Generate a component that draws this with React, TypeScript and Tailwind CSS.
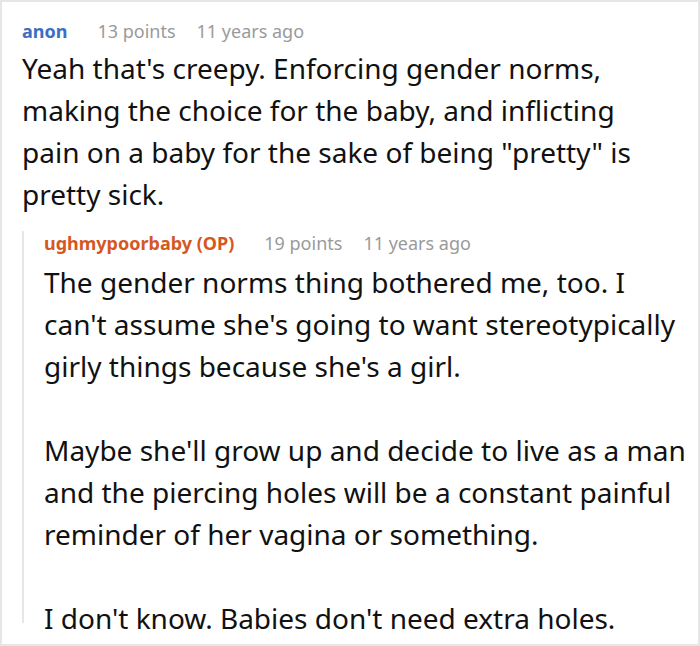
import React from "react";

const font = { fontFamily: '"Noto Sans", "DejaVu Sans", sans-serif' };

function Lines({ lines }: { lines: string[] }) {
  return (
    <p>
      {lines.map((l, i) => (
        <span key={i} className="block whitespace-nowrap">
          {l}
        </span>
      ))}
    </p>
  );
}

export default function App() {
  return (
    <div
      className="w-[700px] h-[646px] border-2 border-[#e6e6e6] bg-white overflow-hidden pl-5 pr-2"
      style={font}
    >
      <div className="flex items-center h-[24px] mt-[17px] text-[18px] leading-[24px]">
        <span className="font-bold text-[#3b6fc2]">anon</span>
        <span className="ml-[30px] text-[#9a9a9a]">13 points</span>
        <span className="ml-[21px] text-[#9a9a9a]">11 years ago</span>
      </div>
      <div className="mt-[4px] text-[28px] leading-[42px] text-[#111]">
        <Lines
          lines={[
            "Yeah that's creepy. Enforcing gender norms,",
            "making the choice for the baby, and inflicting",
            'pain on a baby for the sake of being "pretty" is',
            "pretty sick.",
          ]}
        />
      </div>
      <div className="mt-[21px] border-l-2 border-[#e6e6e6] pl-5 h-[392px]">
        <div className="flex items-center h-[24px] mt-[-5px] text-[18px] leading-[24px]">
          <span className="font-bold text-[#d5581f]">ughmypoorbaby (OP)</span>
          <span className="ml-[30px] text-[#9a9a9a]">19 points</span>
          <span className="ml-[21px] text-[#9a9a9a]">11 years ago</span>
        </div>
        <div className="mt-[6px] text-[28px] leading-[42px] text-[#111]">
          <Lines
            lines={[
              "The gender norms thing bothered me, too. I",
              "can't assume she's going to want stereotypically",
              "girly things because she's a girl.",
            ]}
          />
          <div className="mt-[42px]">
            <Lines
              lines={[
                "Maybe she'll grow up and decide to live as a man",
                "and the piercing holes will be a constant painful",
                "reminder of her vagina or something.",
              ]}
            />
          </div>
          <div className="mt-[42px]">
            <Lines lines={["I don't know. Babies don't need extra holes."]} />
          </div>
        </div>
      </div>
    </div>
  );
}
